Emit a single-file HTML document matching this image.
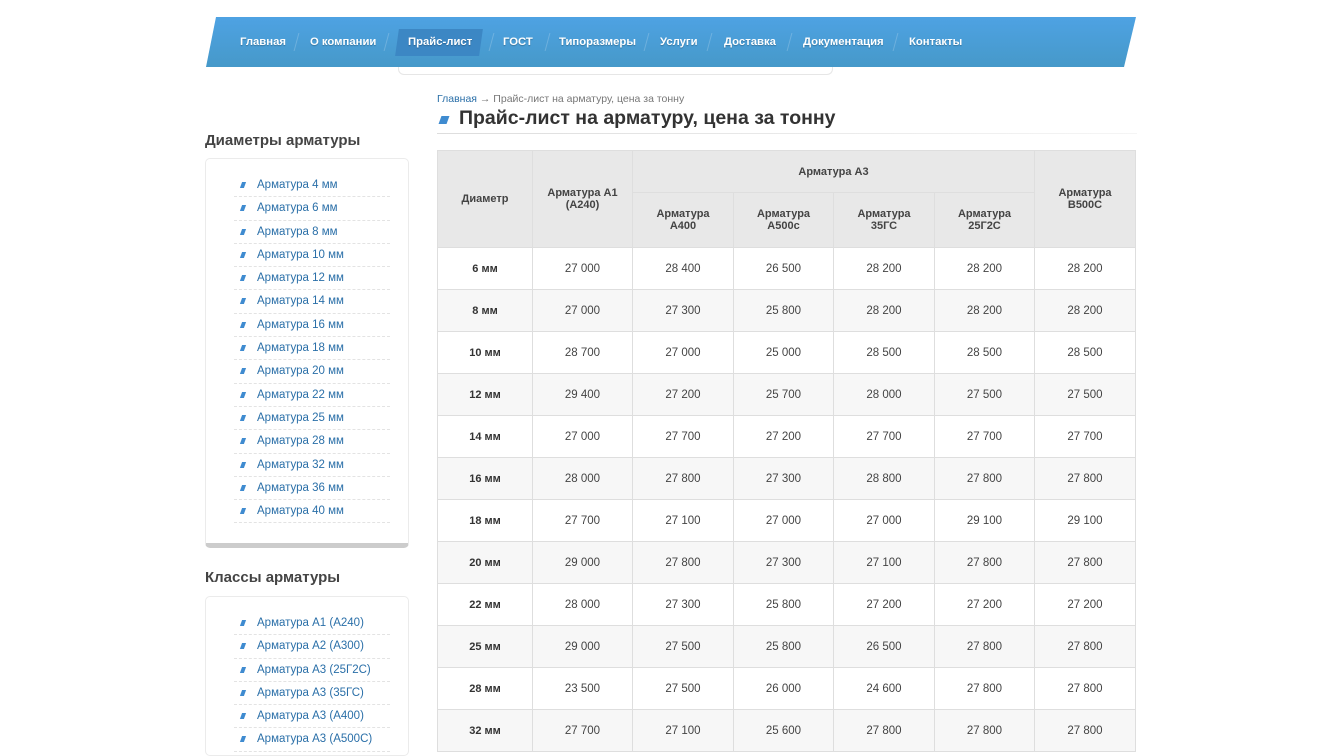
<!DOCTYPE html>
<html><head><meta charset="utf-8"><style>
*{margin:0;padding:0;box-sizing:border-box}
body{width:1340px;height:735px;overflow:hidden;background:#fff;font-family:"Liberation Sans",Arial,sans-serif;position:relative}
.nav{position:absolute;left:206px;top:17px;width:930px;height:50px;background:linear-gradient(#4ea2e3,#4699c9);clip-path:polygon(10px 0,100% 0,calc(100% - 12px) 100%,0 100%);}
.navshadow{position:absolute;left:398px;top:60px;width:435px;height:15px;border:1px solid #e6e6e6;border-top:none;border-radius:0 0 6px 6px}
.nav a{position:absolute;top:0;line-height:50px;color:#fff;font-size:11.3px;font-weight:bold;text-decoration:none;text-shadow:0 1px 1px rgba(0,0,0,.25)}
.act{position:absolute;left:191px;top:12px;width:84px;height:27px;background:#3c87c4;transform:skewX(-8deg)}
.sep{position:absolute;top:16px;width:1px;height:18px;background:rgba(255,255,255,.2);transform:skewX(-15deg)}
h3{position:absolute;left:205px;font-size:15px;font-weight:bold;color:#444}
.box{position:absolute;left:205px;width:204px;border:1px solid #ebebeb;border-radius:5px;background:#fff}
.box ul{list-style:none;margin:15px 18px 0 28px}
.box li{height:23.3px;line-height:23px;border-bottom:1px dashed #e3e3e3;font-size:11.5px;color:#2a6fa8;padding-left:23px;position:relative}
.box li:before{content:"";position:absolute;left:7px;top:8px;width:4px;height:6px;background:#3f8bd0;transform:skewX(-20deg)}
.bc{position:absolute;left:437px;top:93px;font-size:10.5px;color:#777}
.bc b{color:#2a6fa8;font-weight:normal}
h1{position:absolute;left:459px;top:107px;font-size:19.5px;color:#333;font-weight:bold}
.mk{position:absolute;left:440px;top:116px;width:8px;height:8px;background:#3f8bd0;transform:skewX(-20deg)}
.hl{position:absolute;left:437px;top:133px;width:700px;height:1px;background:linear-gradient(90deg,#ddd,#f5f5f5)}
table{position:absolute;left:437px;top:150px;border-collapse:collapse;font-size:11.5px;color:#444;table-layout:fixed}
td,th{border:1px solid #dedede;text-align:center}
th{background:#e8e8e8;font-weight:bold;color:#444;font-size:11px}
tbody tr{height:42px}
tbody tr:nth-child(even){background:#f7f7f7}
tbody td:first-child{font-weight:bold;font-size:11px;color:#333}
</style></head><body>
<div class="navshadow"></div>
<div class="nav">
<div class="act"></div>
<a style="left:34px">Главная</a><div class="sep" style="left:90px"></div>
<a style="left:104px">О компании</a><div class="sep" style="left:180px"></div>
<a style="left:202px">Прайс-лист</a><div class="sep" style="left:285px"></div>
<a style="left:297px">ГОСТ</a><div class="sep" style="left:341px"></div>
<a style="left:353px">Типоразмеры</a><div class="sep" style="left:440px"></div>
<a style="left:454px">Услуги</a><div class="sep" style="left:503px"></div>
<a style="left:518px">Доставка</a><div class="sep" style="left:583px"></div>
<a style="left:597px">Документация</a><div class="sep" style="left:689px"></div>
<a style="left:703px">Контакты</a>
</div>
<h3 style="top:132px">Диаметры арматуры</h3>
<div class="box" style="top:158px;height:390px;border-bottom:5px solid #ccc">
<ul><li>Арматура 4 мм</li><li>Арматура 6 мм</li><li>Арматура 8 мм</li><li>Арматура 10 мм</li><li>Арматура 12 мм</li><li>Арматура 14 мм</li><li>Арматура 16 мм</li><li>Арматура 18 мм</li><li>Арматура 20 мм</li><li>Арматура 22 мм</li><li>Арматура 25 мм</li><li>Арматура 28 мм</li><li>Арматура 32 мм</li><li>Арматура 36 мм</li><li>Арматура 40 мм</li></ul>
</div>
<h3 style="top:569px">Классы арматуры</h3>
<div class="box" style="top:596px;height:160px">
<ul><li>Арматура А1 (А240)</li><li>Арматура А2 (А300)</li><li>Арматура А3 (25Г2С)</li><li>Арматура А3 (35ГС)</li><li>Арматура А3 (А400)</li><li>Арматура А3 (А500С)</li></ul>
</div>
<div class="bc"><b>Главная</b> → Прайс-лист на арматуру, цена за тонну</div>
<div class="mk"></div>
<h1>Прайс-лист на арматуру, цена за тонну</h1>
<div class="hl"></div>
<table>
<colgroup><col style="width:95px"><col style="width:100px"><col style="width:101px"><col style="width:100px"><col style="width:101px"><col style="width:100px"><col style="width:101px"></colgroup>
<thead>
<tr style="height:42px"><th rowspan="2">Диаметр</th><th rowspan="2">Арматура А1<br>(А240)</th><th colspan="4">Арматура А3</th><th rowspan="2">Арматура<br>В500С</th></tr>
<tr style="height:55px"><th>Арматура<br>А400</th><th>Арматура<br>А500с</th><th>Арматура<br>35ГС</th><th>Арматура<br>25Г2С</th></tr>
</thead>
<tbody>
<tr><td>6 мм</td><td>27 000</td><td>28 400</td><td>26 500</td><td>28 200</td><td>28 200</td><td>28 200</td></tr>
<tr><td>8 мм</td><td>27 000</td><td>27 300</td><td>25 800</td><td>28 200</td><td>28 200</td><td>28 200</td></tr>
<tr><td>10 мм</td><td>28 700</td><td>27 000</td><td>25 000</td><td>28 500</td><td>28 500</td><td>28 500</td></tr>
<tr><td>12 мм</td><td>29 400</td><td>27 200</td><td>25 700</td><td>28 000</td><td>27 500</td><td>27 500</td></tr>
<tr><td>14 мм</td><td>27 000</td><td>27 700</td><td>27 200</td><td>27 700</td><td>27 700</td><td>27 700</td></tr>
<tr><td>16 мм</td><td>28 000</td><td>27 800</td><td>27 300</td><td>28 800</td><td>27 800</td><td>27 800</td></tr>
<tr><td>18 мм</td><td>27 700</td><td>27 100</td><td>27 000</td><td>27 000</td><td>29 100</td><td>29 100</td></tr>
<tr><td>20 мм</td><td>29 000</td><td>27 800</td><td>27 300</td><td>27 100</td><td>27 800</td><td>27 800</td></tr>
<tr><td>22 мм</td><td>28 000</td><td>27 300</td><td>25 800</td><td>27 200</td><td>27 200</td><td>27 200</td></tr>
<tr><td>25 мм</td><td>29 000</td><td>27 500</td><td>25 800</td><td>26 500</td><td>27 800</td><td>27 800</td></tr>
<tr><td>28 мм</td><td>23 500</td><td>27 500</td><td>26 000</td><td>24 600</td><td>27 800</td><td>27 800</td></tr>
<tr><td>32 мм</td><td>27 700</td><td>27 100</td><td>25 600</td><td>27 800</td><td>27 800</td><td>27 800</td></tr>
</tbody></table>
</body></html>
